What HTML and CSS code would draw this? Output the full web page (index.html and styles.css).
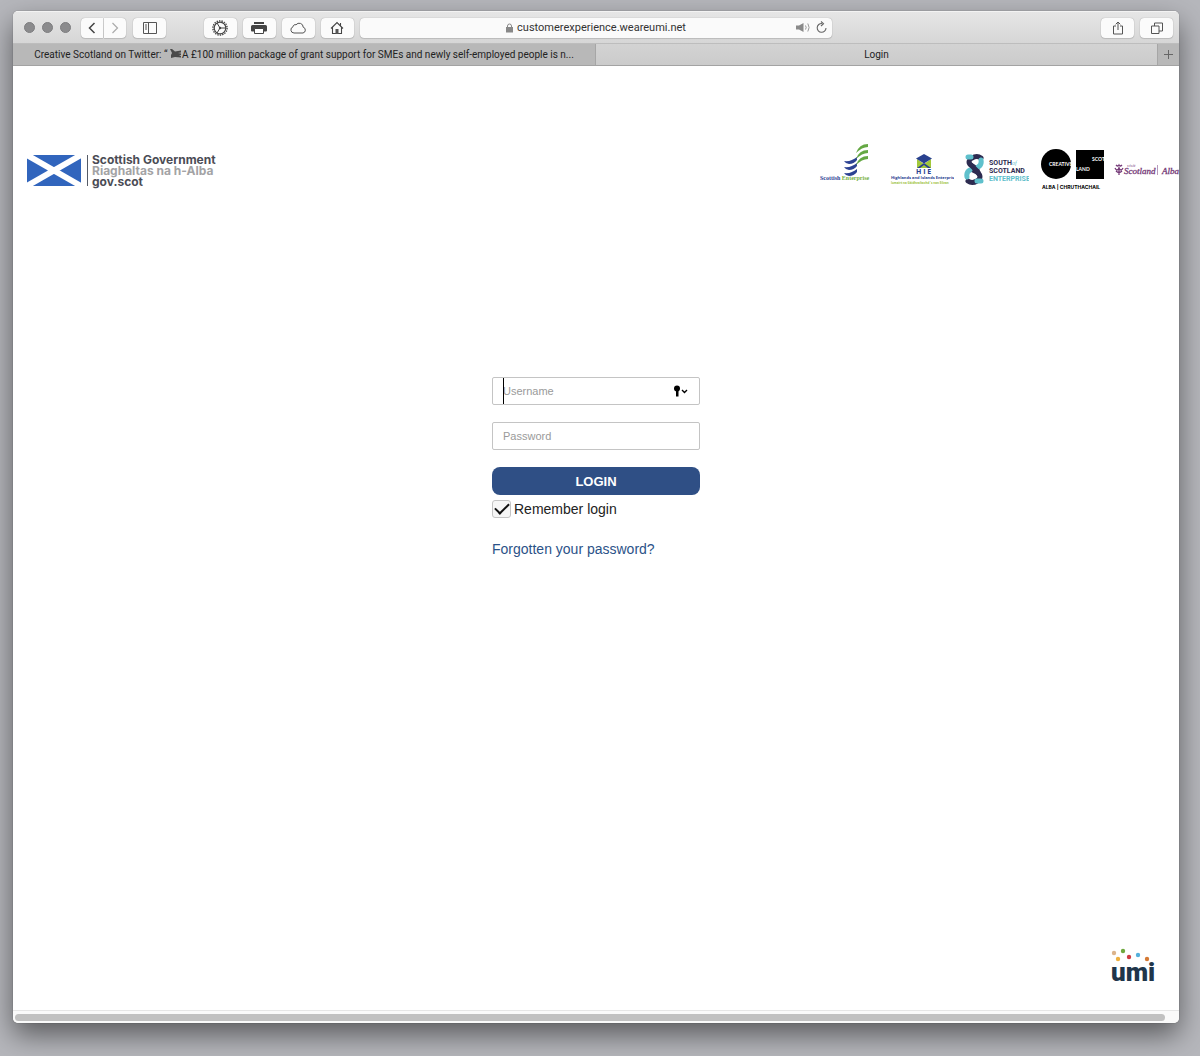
FILE: index.html
```html
<!DOCTYPE html>
<html lang="en">
<head>
    <meta charset="UTF-8">
    <meta name="viewport" content="width=device-width, initial-scale=1.0">
    <title>Login</title>
    <link rel="stylesheet" href="styles.css">
</head>
<body>
    <div class="window">
        <div class="toolbar">
            <div class="toolbar-left">
                <div class="lights"><span></span><span></span><span></span></div>
                <div class="nav-group">
                    <button class="tool nav" aria-label="Back"><svg width="10" height="14" viewBox="0 0 10 14"><path d="M7.5 2 2.5 7l5 5" stroke="#444" stroke-width="1.5"/></svg></button>
                    <button class="tool nav" aria-label="Forward"><svg width="10" height="14" viewBox="0 0 10 14"><path d="m2.5 2 5 5-5 5" stroke="#aaa" stroke-width="1.2"/></svg></button>
                </div>
                <button class="tool" aria-label="Sidebar"><svg width="14" height="12" viewBox="0 0 14 12"><path d="M.5.5h13v11H.5zM5.5.5v11M2 3h2M2 5h2M2 7h2" stroke="#555"/></svg></button>
                <div class="tool-group">
                    <button class="tool" aria-label="Settings"><svg width="16" height="16" viewBox="0 0 16 16"><circle cx="8" cy="8" r="7.1" stroke="#444" stroke-width="1.4" stroke-dasharray="1.4 1.08"/><circle cx="8" cy="8" r="5.8" stroke="#444" stroke-width="1.2"/><circle cx="8" cy="8" r="1.2" fill="#444"/><path d="m8 8-3-5M8 8h6M8 8l-3 5" stroke="#444"/></svg></button>
                    <button class="tool" aria-label="Print"><svg width="16" height="14" viewBox="0 0 16 14"><path d="M3 1h10v2H3zM1.500 4h13a1.500 1.500 0 0 1 1.500 1.500v4a1 1 0 0 1-1 1H1a1 1 0 0 1-1-1v-4A1.500 1.500 0 0 1 1.500 4z" fill="#444"/><path d="M3.500 7.500h9v5h-9z" fill="#fff" stroke="#444"/></svg></button>
                    <button class="tool" aria-label="iCloud"><svg width="17" height="12" viewBox="0 0 17 12"><path d="M4 11a3.200 3.200 0 0 1-1-6.200 2.200 2.200 0 0 1 3-2 4 4 0 0 1 7.200 2.400A3 3 0 0 1 13 11z" stroke="#555"/></svg></button>
                    <button class="tool" aria-label="Home"><svg width="14" height="14" viewBox="0 0 14 14"><path d="M1 7.500 7 1.500l6 6M2.500 6.500v6h9v-6M10.500 4.500V2" stroke="#444" stroke-width="1.100"/><path d="M5.500 8h3v5h-3z" fill="#555"/></svg></button>
                </div>
            </div>
            <div class="address">
                <svg class="lock" width="7" height="10" viewBox="0 0 7 10"><path d="M0 4h7v5.500H0z" fill="#888"/><path d="M1.500 4.500V3a2 2 0 0 1 4 0v1.500" stroke="#888"/></svg>
                <span class="url">customerexperience.weareumi.net</span>
                <div class="address-actions">
                    <svg width="15" height="11" viewBox="0 0 15 11"><path d="M0 3.500h3L7.500 1v9L3 7.500H0z" fill="#8a8a8a"/><path d="M9.500 3.500q1.400 2 0 4M11.800 1.500q2.600 4 0 8" stroke="#999"/></svg>
                    <svg width="11" height="13" viewBox="0 0 11 13"><path d="M6 2.500a4.400 4.400 0 1 0 4 4.500M5 .5l2.500 2.200L5 5" stroke="#666" stroke-width="1.100"/></svg>
                </div>
            </div>
            <div class="toolbar-right">
                <button class="tool" aria-label="Share"><svg width="12" height="14" viewBox="0 0 12 14"><path d="M4 5H1.500v8h9V5H8M6 9V1M3.700 3.300 6 1l2.300 2.300" stroke="#555"/></svg></button>
                <button class="tool" aria-label="Show tabs"><svg width="12" height="12" viewBox="0 0 12 12"><path d="M.5 4h7.500v7.500H.5zM3.500 4V1h8v8H8" stroke="#555"/></svg></button>
            </div>
        </div>

        <div class="tabs">
            <div class="tab">
                <span class="tab-title">Creative Scotland on Twitter: “
                    <svg width="12" height="9" viewBox="0 0 12 9"><path d="M0 0h2l3 2.500 6-1v2L8 4l3 .5v1.500l-2 .5 2 .5v1.500L5 8 1 9V6l1-2z" fill="#4a4a4a"/></svg>A £100 million package of grant support for SMEs and newly self-employed people is n...</span>
            </div>
            <div class="tab active"><span class="tab-title">Login</span></div>
            <button class="new-tab" aria-label="New tab"><svg width="11" height="11" viewBox="0 0 11 11"><path d="M5.500 1v9M1 5.500h9" stroke="#666"/></svg></button>
        </div>

        <div class="page">
            <header class="header">
                <svg class="gov-logo" width="192" height="50" viewBox="0 0 192 50" role="img" aria-label="Scottish Government">
                    <path d="M0 13h54v31H0z" fill="#3165bd"/>
                    <path d="m0 13 54 31M54 13 0 44" stroke="#fff" stroke-width="6"/>
                    <path d="M60.500 13v31" stroke="#555b66"/>
                    <g class="gov-text">
                        <text x="65" y="22" fill="#4b4c55">Scottish Government</text>
                        <text x="65" y="33" fill="#a3a3a5">Riaghaltas na h-Alba</text>
                        <text x="65" y="44" fill="#4b4c55">gov.scot</text>
                    </g>
                </svg>

                <div class="partners">
                    <!-- Scottish Enterprise -->
                    <svg width="65" height="50" viewBox="0 0 65 50">
                        <g fill="#2c4293">
                            <path d="M30 19q7 1 13-4v3q-3 4-8 4-3 0-5-3z"/>
                            <path d="M30 25q7 1 13-4v3q-3 4-8 4-3 0-5-3z"/>
                            <path d="M30 31q7 1 13-4v3q-3 4-8 4-3 0-5-3z"/>
                        </g>
                        <g fill="#65a844">
                            <path d="M42 11q3-9 12-9v3q-6 0-12 6z"/>
                            <path d="M42 17q3-9 12-9v3q-6 0-12 6z"/>
                            <path d="M42 23q3-9 12-9v3q-6 0-12 6z"/>
                        </g>
                        <text class="se-text" x="6" y="38" fill="#2c4293">Scottish <tspan fill="#76b043">Enterprise</tspan></text>
                    </svg>
                    <!-- Highlands and Islands Enterprise -->
                    <svg width="65" height="50" viewBox="0 0 65 50">
                        <path d="M28 17v9h14v-9l-7 5z" fill="#a2c83a"/>
                        <path d="m35 12 8 4.500-8 5-8-5z" fill="#29418f"/>
                        <path d="m28 26 7-5 7 5z" fill="#29418f"/>
                        <path d="m31 26 4-3 4 3z" fill="#a2c83a"/>
                        <text class="hie-name" x="27" y="32" fill="#29418f">H I E</text>
                        <text class="hie-text" x="2" y="37" fill="#29418f">Highlands and Islands Enterpris</text>
                        <text class="hie-sub" x="2" y="42" fill="#9cc23b">Iomairt na Gàidhealtachd 's nan Eilean</text>
                    </svg>
                    <!-- South of Scotland Enterprise -->
                    <svg width="65" height="50" viewBox="0 0 65 50">
                        <g stroke-width="5" stroke-linecap="round">
                            <path d="M17 16q-4-3-9 0-6 4 0 8l5 3" stroke="#2d2b50"/>
                            <path d="M4 39q4 3 9 0 6-4 0-9l-4-2" stroke="#2d2b50"/>
                            <path d="M4 15h3M17 18q1 5-3 7M17 39h-4M3 35q-1-5 3-7" stroke="#5fc0cc"/>
                            <path d="m7 23 7 7" stroke="#2d2b50"/>
                        </g>
                        <g class="sse-text">
                            <text x="25" y="23" fill="#2d2b50">SOUTH<tspan class="sse-of" fill="#5fc0cc">of</tspan></text>
                            <text x="25" y="31" fill="#2d2b50">SCOTLAND</text>
                            <text x="25" y="39" fill="#5fc0cc">ENTERPRISE</text>
                        </g>
                    </svg>
                    <!-- Creative Scotland -->
                    <svg width="65" height="50" viewBox="0 0 65 50">
                        <circle cx="17" cy="22" r="15" fill="#000"/>
                        <path d="M37 8h28v29H37z" fill="#000"/>
                        <g class="cs-text">
                            <text x="10" y="24" fill="#fff">CREATIVE</text>
                            <text x="53" y="19" fill="#fff">SCOT</text>
                            <text x="37" y="29" fill="#fff">LAND</text>
                        </g>
                        <text class="cs-alba" x="3" y="47" fill="#000">ALBA | CHRUTHACHAIL</text>
                    </svg>
                    <!-- VisitScotland -->
                    <svg width="65" height="50" viewBox="0 0 65 50">
                        <path d="M2 23q2 2 3 0 1 2 3 0M1 26q2 4 4 0 2 4 4 0M2 29q3 3 6 0M5 25v8" stroke="#753a78" stroke-width="1.300"/>
                        <text class="vs-visit" x="13" y="25" fill="#753a78">visit</text>
                        <text class="vs-text" x="10" y="32" fill="#753a78">Scotland</text>
                        <path d="M43.500 23v10" stroke="#b99abb"/>
                        <text class="vs-text" x="48" y="32" fill="#753a78">Alba</text>
                    </svg>
                </div>
            </header>

            <form class="login-form">
                <div class="field">
                    <input type="text" id="username" placeholder="Username" aria-label="Username">
                    <span class="caret"></span>
                    <svg class="key" width="14" height="12" viewBox="0 0 14 12"><circle cx="3" cy="3.500" r="3" fill="#000"/><path d="M2 5h2.500v6.500H2z" fill="#000"/><path d="m8 5 2.500 2.500L13 5" stroke="#000" stroke-width="1.400"/></svg>
                </div>
                <div class="field">
                    <input type="password" id="password" placeholder="Password" aria-label="Password">
                </div>
                <button class="login-btn" type="submit">LOGIN</button>
                <label class="remember"><input type="checkbox" checked>Remember login</label>
                <a class="forgot" href="#">Forgotten your password?</a>
            </form>

            <footer class="footer">
                <svg width="46" height="36" viewBox="0 0 46 36" role="img" aria-label="umi">
                    <circle cx="3" cy="5" r="2.200" fill="#dcb48c"/>
                    <circle cx="12" cy="3" r="2.200" fill="#6fa83e"/>
                    <circle cx="7" cy="11" r="2.200" fill="#eeb03f"/>
                    <circle cx="18" cy="9" r="2.200" fill="#cf3b43"/>
                    <circle cx="27" cy="7" r="2.200" fill="#56b0dc"/>
                    <circle cx="36" cy="11" r="2.200" fill="#d57a35"/>
                    <text class="umi-text" x="0" y="33" fill="#20354a">umi</text>
                </svg>
            </footer>
        </div>

        <div class="scrollbar"><div class="thumb"></div></div>
    </div>
</body>
</html>
```

FILE: styles.css
```css
:root {
    --ui-font: Roboto, 'Liberation Sans', sans-serif;
    --body-font: 'Liberation Sans', Arial, sans-serif;
    --blue: #2f4f85;
}

* {
    box-sizing: border-box;
    margin: 0;
    padding: 0;
}

svg {
    display: block;
    fill: none;
    flex-shrink: 0;
}

body {
    min-height: 100vh;
    display: flex;
    padding: 11px 21px 33px 13px;
    background: #b6b7bc;
    font-family: var(--body-font);
}

.window {
    flex: 1;
    min-width: 0;
    display: flex;
    flex-direction: column;
    border-radius: 5px;
    overflow: hidden;
    background: #fff;
    box-shadow: 0 0 1px rgba(0, 0, 0, 0.6), 0 12px 28px rgba(0, 0, 0, 0.5);
}

/* browser toolbar */
.toolbar {
    display: grid;
    grid-template-columns: 1fr 40.5% 1fr;
    align-items: center;
    height: 33px;
    background: linear-gradient(#e6e6e6, #d6d6d6);
    border-top: 1px solid #f3f3f3;
    border-bottom: 1px solid #bdbdbd;
}

.toolbar-left,
.toolbar-right {
    display: flex;
    align-items: center;
    gap: 7px;
    padding: 0 6px 0 7px;
}

.toolbar-right {
    justify-content: flex-end;
    gap: 6px;
}

.lights {
    display: flex;
    gap: 7px;
    padding: 0 3px 0 4px;
}

.lights span {
    width: 11px;
    height: 11px;
    border-radius: 50%;
    background: #8b8b8d;
    border: 1px solid #7d7d7f;
}

.nav-group {
    display: flex;
    gap: 1px;
}

.tool-group {
    display: flex;
    gap: 6px;
    margin-left: auto;
}

.tool {
    display: flex;
    align-items: center;
    justify-content: center;
    width: 33px;
    height: 20px;
    border: none;
    border-radius: 4px;
    background: #fbfbfb;
    box-shadow: 0 0 1px rgba(0, 0, 0, 0.4), 0 1px 1px rgba(0, 0, 0, 0.1);
}

.nav {
    width: 22px;
}

.nav:first-child {
    border-radius: 4px 0 0 4px;
}

.nav:last-child {
    border-radius: 0 4px 4px 0;
}

.address {
    position: relative;
    display: flex;
    align-items: center;
    justify-content: center;
    gap: 4px;
    height: 20px;
    border-radius: 4px;
    background: #fafafa;
    box-shadow: 0 0 1px rgba(0, 0, 0, 0.4), 0 1px 1px rgba(0, 0, 0, 0.1);
    font-family: var(--ui-font);
    font-size: 11px;
    color: #333;
}

.address-actions {
    position: absolute;
    right: 5px;
    display: flex;
    align-items: center;
    gap: 5px;
}

/* tabs */
.tabs {
    display: flex;
    height: 22px;
    border-bottom: 1px solid #a3a3a3;
    background: #b8b8b8;
    font-family: var(--ui-font);
    font-size: 10px;
    color: #222;
}

.tab {
    flex: 0 0 50%;
    min-width: 0;
    display: flex;
    align-items: center;
    justify-content: center;
    border-right: 1px solid #a6a6a6;
}

.tab.active {
    flex: 1;
    background: linear-gradient(#d3d3d3, #cbcbcb);
}

.tab-title {
    white-space: nowrap;
    overflow: hidden;
}

.tab-title svg {
    display: inline-block;
}

.new-tab {
    display: flex;
    align-items: center;
    justify-content: center;
    width: 21px;
    border: none;
    background: transparent;
}

/* page */
.page {
    flex: 1;
    display: flex;
    flex-direction: column;
}

.header {
    display: flex;
    justify-content: space-between;
    align-items: center;
    padding: 76px 0 0 14px;
}

.gov-text {
    font: bold 12px Inter, sans-serif;
}

.partners {
    display: flex;
    gap: 10px;
    overflow: hidden;
}

.se-text {
    font: bold 6px 'Liberation Serif', serif;
}

.hie-name {
    font: bold 7px 'Open Sans', sans-serif;
}

.hie-text {
    font: bold 4px 'Open Sans', sans-serif;
}

.hie-sub {
    font: bold 3px 'Open Sans', sans-serif;
}

.sse-text {
    font: bold 7px Roboto, sans-serif;
}

.sse-of {
    font: italic 6px 'Liberation Serif', serif;
}

.cs-text {
    font: bold 5px Lato, sans-serif;
}

.cs-alba {
    font: bold 5px Inter, sans-serif;
}

.vs-text {
    font: italic 9px 'Liberation Serif', serif;
    stroke: #753a78;
    stroke-width: 0.3px;
}

.vs-visit {
    font: italic 5px 'Liberation Serif', serif;
}

/* login form */
.login-form {
    width: 208px;
    margin: 185px auto 0;
    display: flex;
    flex-direction: column;
}

.field {
    position: relative;
    margin-bottom: 17px;
}

.field input {
    display: block;
    width: 100%;
    height: 28px;
    padding: 0 10px;
    border: 1px solid #c4c4c4;
    border-radius: 2px;
    font: 11px var(--body-font);
}

.field input::placeholder {
    color: #9a9a9a;
}

.caret {
    position: absolute;
    left: 11px;
    top: 1px;
    bottom: 1px;
    width: 1px;
    background: #000;
}

.key {
    position: absolute;
    right: 12px;
    top: 8px;
}

.login-btn {
    height: 28px;
    border: none;
    border-radius: 8px;
    background: var(--blue);
    color: #fff;
    font: bold 13px var(--body-font);
}

.remember {
    display: flex;
    align-items: center;
    gap: 3px;
    margin-top: 5px;
    font-size: 14px;
    color: #222;
}

.remember input {
    appearance: none;
    width: 19px;
    height: 18px;
    border: 1px solid #c4c4c4;
    border-radius: 3px;
    background: #f6f6f6;
    display: flex;
    align-items: center;
    justify-content: center;
}

.remember input:checked::before {
    content: '';
    width: 12px;
    height: 6px;
    margin-bottom: 4px;
    border-left: 2px solid #111;
    border-bottom: 2px solid #111;
    transform: rotate(-45deg);
}

.forgot {
    margin-top: 23px;
    font-size: 14px;
    color: #2b5288;
    text-decoration: none;
}

.footer {
    display: flex;
    justify-content: flex-end;
    margin-top: auto;
    padding: 0 22px 26px;
}

.umi-text {
    font: 900 26px Roboto, sans-serif;
}

.scrollbar {
    height: 13px;
    padding: 3px 14px 3px 2px;
    border-top: 1px solid #e6e6e6;
    background: #fafafa;
}

.thumb {
    height: 7px;
    border-radius: 4px;
    background: #c1c1c1;
}
```
